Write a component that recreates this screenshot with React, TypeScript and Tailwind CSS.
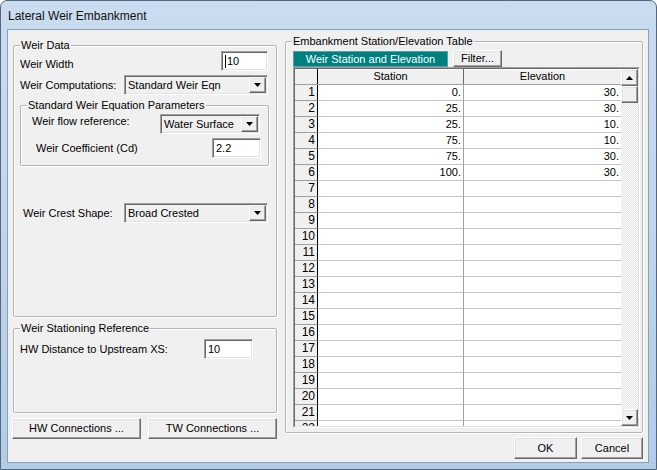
import React from 'react';

// classic 3D edges
const sunken =
  'border border-t-[#a0a0a0] border-l-[#a0a0a0] border-b-white border-r-white shadow-[inset_1px_1px_0_#696969,inset_-1px_-1px_0_#e3e3e3]';
const raised =
  'border border-t-white border-l-white border-b-[#696969] border-r-[#696969] shadow-[inset_-1px_-1px_0_#a0a0a0,inset_1px_1px_0_#e3e3e3]';

function Arrow({ dir }: { dir: 'up' | 'down' }) {
  return (
    <svg width="7" height="4" viewBox="0 0 7 4">
      <polygon points={dir === 'down' ? '0,0 7,0 3.5,4' : '0,4 7,4 3.5,0'} fill="#000" />
    </svg>
  );
}

function GroupBox({ label, className, children }: { label: string; className?: string; children?: React.ReactNode }) {
  return (
    <div className={`relative border border-[#b4b4b4] rounded-[2px] shadow-[inset_1px_1px_0_#fff,1px_1px_0_#fff] ${className ?? ''}`}>
      <span className="absolute -top-[7px] left-[6px] px-[1px] bg-[#f0f0f0] leading-[13px] whitespace-nowrap">{label}</span>
      {children}
    </div>
  );
}

function TextBox({ value, className, caret }: { value: string; className?: string; caret?: boolean }) {
  return (
    <div className={`h-[20px] bg-white flex items-center pl-[3px] ${sunken} ${className ?? ''}`}>
      {caret && <span className="w-[1px] h-[13px] bg-black mr-[1px]" />}
      <span>{value}</span>
    </div>
  );
}

function Combo({ value, className }: { value: string; className?: string }) {
  return (
    <div className={`h-[20px] bg-[#f0f0f0] flex items-center ${sunken} ${className ?? ''}`}>
      <span className="flex-1 pl-[3px] whitespace-nowrap overflow-hidden">{value}</span>
      <div className={`w-[17px] h-[16px] mr-[1px] flex items-center justify-center bg-[#f0f0f0] ${raised}`}>
        <Arrow dir="down" />
      </div>
    </div>
  );
}

function Button({ label, className }: { label: string; className?: string }) {
  return (
    <div className={`flex items-center justify-center bg-[#f0f0f0] ${raised} ${className ?? ''}`}>
      <span>{label}</span>
    </div>
  );
}

const points: [string, string][] = [
  ['0.', '30.'],
  ['25.', '30.'],
  ['25.', '10.'],
  ['75.', '10.'],
  ['75.', '30.'],
  ['100.', '30.'],
];

function StationTable() {
  const rows = Array.from({ length: 22 }, (_, i) => i + 1);
  return (
    <div className="w-[347px] h-[361px] border border-t-[#a0a0a0] border-l-[#a0a0a0] border-b-white border-r-white">
      <div className="w-full h-full border border-t-[#696969] border-l-[#696969] border-b-[#e3e3e3] border-r-[#e3e3e3] flex">
        <div className="w-[326px] h-full flex flex-col bg-white overflow-hidden">
          <div className="h-[16px] shrink-0 flex bg-[#f0f0f0] border-b border-b-[#a0a0a0] shadow-[inset_0_1px_0_#fff]">
            <div className="w-[23px] border-r border-r-black" />
            <div className="w-[146px] border-r border-r-[#696969] text-center leading-[15px]">Station</div>
            <div className="w-[157px] text-center leading-[15px]">Elevation</div>
          </div>
          {rows.map((n) => {
            const p = points[n - 1];
            return (
              <div key={n} className="h-[16px] shrink-0 flex">
                <div className="w-[23px] bg-[#f0f0f0] border-r border-r-black border-b border-b-[#a0a0a0] text-right pr-[2px] leading-[15px] text-[12px]">
                  {n}
                </div>
                <div className="w-[146px] border-r border-r-[#a0a0a0] border-b border-b-[#c4c4c4] text-right pr-[2px] leading-[15px]">
                  {p ? p[0] : ''}
                </div>
                <div className="w-[157px] border-b border-b-[#c4c4c4] text-right pr-[2px] leading-[15px]">
                  {p ? p[1] : ''}
                </div>
              </div>
            );
          })}
        </div>
        <div className="w-[17px] h-full flex flex-col bg-[repeating-conic-gradient(#e6e6e6_0%_25%,#fbfbfb_0%_50%)] bg-[length:2px_2px]">
          <div className={`h-[17px] shrink-0 flex items-center justify-center bg-[#f0f0f0] ${raised}`}>
            <Arrow dir="up" />
          </div>
          <div className={`h-[17px] shrink-0 bg-[#f0f0f0] ${raised}`} />
          <div className="flex-1" />
          <div className={`h-[17px] shrink-0 flex items-center justify-center bg-[#f0f0f0] ${raised}`}>
            <Arrow dir="down" />
          </div>
        </div>
      </div>
    </div>
  );
}

export default function App() {
  return (
    <div className="w-[657px] h-[470px] font-['Liberation_Sans',Arial,sans-serif] text-[11px] leading-[13px] text-black rounded-t-[7px] border border-[#55677c] bg-gradient-to-b from-[#cadcef] via-[#c0d5ec] to-[#b2cbe7] px-[6px] overflow-hidden">
      <div className="h-[28px] flex items-center pl-[1px] pt-[2px] text-[12px] text-[#111]">Lateral Weir Embankment</div>
      <div className="w-[642px] h-[434px] border border-[#8ca0b8] bg-[#f0f0f0] flex pl-[5px] pt-[11px]">
        {/* left column */}
        <div className="w-[264px] mt-[4px] flex flex-col">
          <GroupBox label="Weir Data" className="h-[272px] pl-[6px] pr-[8px] pt-[5px]">
            <div className="h-[20px] flex items-center justify-between">
              <span className="mt-[7px]">Weir Width</span>
              <TextBox value="10" caret className="w-[47px]" />
            </div>
            <div className="h-[20px] mt-[4px] flex items-center justify-between">
              <span>Weir Computations:</span>
              <Combo value="Standard Weir Eqn" className="w-[144px]" />
            </div>
            <GroupBox label="Standard Weir Equation Parameters" className="mt-[10px] w-[249px] h-[61px] pl-[11px] pr-[7px] pt-[8px]">
              <div className="h-[20px] flex items-center justify-between">
                <span className="mb-[5px]">Weir flow reference:</span>
                <Combo value="Water Surface" className="w-[100px] mr-[1px]" />
              </div>
              <div className="h-[20px] mt-[4px] flex items-center justify-between pl-[4px]">
                <span>Weir Coefficient (Cd)</span>
                <TextBox value="2.2" className="w-[49px]" />
              </div>
            </GroupBox>
            <div className="h-[20px] mt-[37px] flex items-center justify-between pl-[3px]">
              <span>Weir Crest Shape:</span>
              <Combo value="Broad Crested" className="w-[144px]" />
            </div>
          </GroupBox>

          <GroupBox label="Weir Stationing Reference" className="mt-[11px] h-[85px] pl-[6px] pr-[8px] pt-[10px]">
            <div className="h-[20px] flex items-center">
              <span className="w-[184px]">HW Distance to Upstream XS:</span>
              <TextBox value="10" className="w-[49px]" />
            </div>
          </GroupBox>

          <div className="mt-[5px] flex">
            <Button label="HW Connections ..." className="-ml-[1px] w-[129px] h-[21px]" />
            <Button label="TW Connections ..." className="ml-[7px] w-[129px] h-[21px]" />
          </div>
        </div>

        {/* right column */}
        <div className="ml-[8px] w-[358px] flex flex-col">
          <GroupBox label="Embankment Station/Elevation Table" className="h-[392px] pl-[7px] pt-[9px]">
            <div className="h-[16px] flex">
              <div className="w-[155px] bg-[#008080] text-white flex items-center justify-center border border-[#5f9e9e]">
                Weir Station and Elevation
              </div>
              <Button label="Filter..." className="ml-[5px] w-[49px] -mt-[1px] h-[17px]" />
            </div>
            <StationTable />
          </GroupBox>
          <div className="mt-[4px] flex">
            <Button label="OK" className="ml-[229px] w-[64px] h-[22px]" />
            <Button label="Cancel" className="ml-[4px] w-[63px] h-[22px]" />
          </div>
        </div>
      </div>
    </div>
  );
}
